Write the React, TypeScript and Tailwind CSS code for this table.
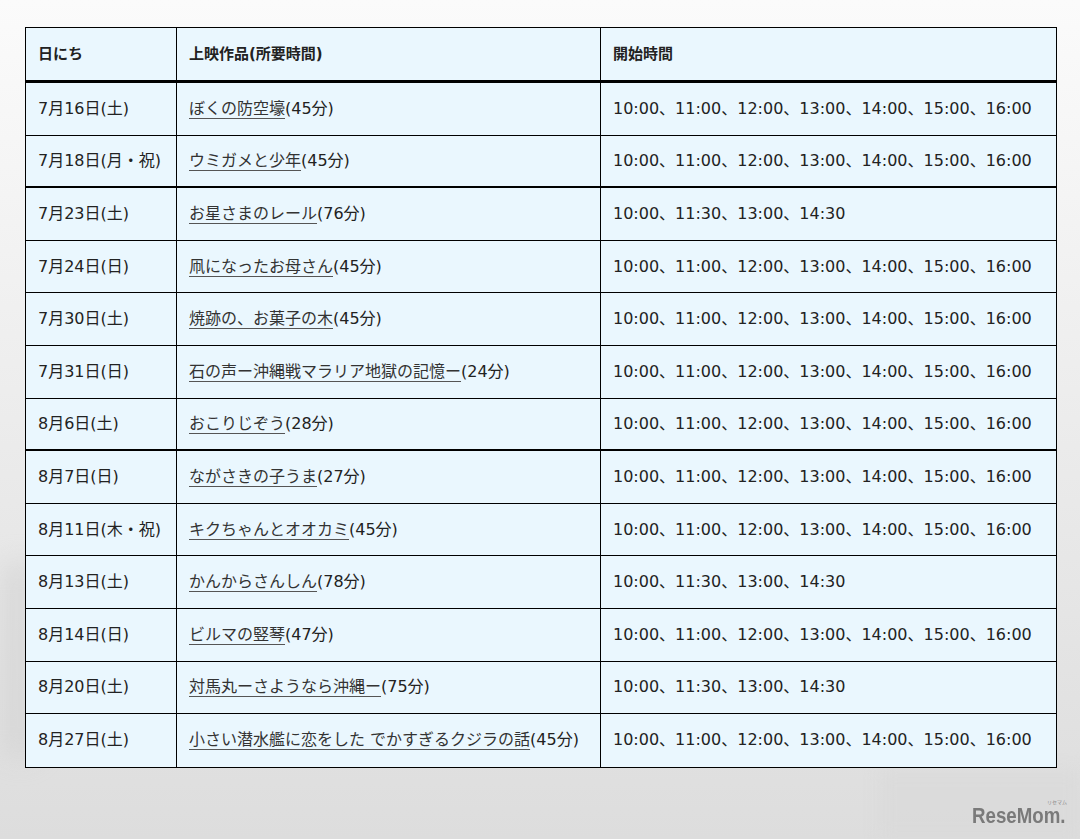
import React from 'react';

type Row = { date: string; title: string; mins: string; times: string; thick?: boolean };

const FULL = '10:00、11:00、12:00、13:00、14:00、15:00、16:00';
const SHORT = '10:00、11:30、13:00、14:30';

const rows: Row[] = [
  { date: '7月16日(土)', title: 'ぼくの防空壕', mins: '(45分)', times: FULL },
  { date: '7月18日(月・祝)', title: 'ウミガメと少年', mins: '(45分)', times: FULL, thick: true },
  { date: '7月23日(土)', title: 'お星さまのレール', mins: '(76分)', times: SHORT },
  { date: '7月24日(日)', title: '凧になったお母さん', mins: '(45分)', times: FULL },
  { date: '7月30日(土)', title: '焼跡の、お菓子の木', mins: '(45分)', times: FULL },
  { date: '7月31日(日)', title: '石の声ー沖縄戦マラリア地獄の記憶ー', mins: '(24分)', times: FULL },
  { date: '8月6日(土)', title: 'おこりじぞう', mins: '(28分)', times: FULL, thick: true },
  { date: '8月7日(日)', title: 'ながさきの子うま', mins: '(27分)', times: FULL },
  { date: '8月11日(木・祝)', title: 'キクちゃんとオオカミ', mins: '(45分)', times: FULL },
  { date: '8月13日(土)', title: 'かんからさんしん', mins: '(78分)', times: SHORT },
  { date: '8月14日(日)', title: 'ビルマの竪琴', mins: '(47分)', times: FULL },
  { date: '8月20日(土)', title: '対馬丸ーさようなら沖縄ー', mins: '(75分)', times: SHORT },
  { date: '8月27日(土)', title: '小さい潜水艦に恋をした でかすぎるクジラの話', mins: '(45分)', times: FULL },
];

const App = () => {
  return (
    <div className="relative w-[1080px] h-[839px] overflow-hidden bg-gradient-to-b from-[#fbfbfb] via-[#ececec] to-[#dddddd] font-['DejaVu_Sans','Noto_Sans_CJK_JP',sans-serif] text-[16px] text-[#222]">
      {/* faded photo texture */}
      <div className="absolute left-0 top-[560px] w-[40px] h-[200px] rounded-full bg-[#cfcfcf]/50 blur-md" />
      <div className="absolute left-[880px] top-[770px] w-[200px] h-[69px] bg-[#d8d8d8]/60 blur-sm" />

      <div className="relative pt-[27px] pl-[25px]">
        <div className="w-[1032px] border border-black bg-[#eaf7fe]">
          {/* header */}
          <div className="flex h-[55px] border-b-[3px] border-black font-bold text-[15px]">
            <div className="w-[151px] border-r border-black flex items-center pl-[12px]">日にち</div>
            <div className="w-[424px] border-r border-black flex items-center pl-[12px]">上映作品(所要時間)</div>
            <div className="flex-1 flex items-center pl-[12px]">開始時間</div>
          </div>

          {rows.map((r, i) => (
            <div
              key={r.date}
              className={
                'flex h-[52.6px] border-black ' +
                (i === rows.length - 1 ? '' : r.thick ? 'border-b-2' : 'border-b')
              }
            >
              <div className="w-[151px] border-r border-black flex items-center pl-[12px] whitespace-nowrap">{r.date}</div>
              <div className="w-[424px] border-r border-black flex items-center pl-[12px] whitespace-nowrap">
                <a className="text-[#333] underline decoration-[#555] underline-offset-[4px]">{r.title}</a>
                <span>{r.mins}</span>
              </div>
              <div className="flex-1 flex items-center pl-[12px] whitespace-nowrap">{r.times}</div>
            </div>
          ))}
        </div>
      </div>

      {/* logo */}
      <div className="absolute left-[972px] top-[805px]">
        <span className="block origin-left scale-x-[0.85] font-['Liberation_Sans',sans-serif] font-bold text-[22px] leading-none text-[#7a7a7a] whitespace-nowrap">ReseMom.</span>
      </div>
      <span className="absolute left-[1047px] top-[799px] text-[5px] leading-none text-[#888] font-['Noto_Sans_CJK_JP',sans-serif]">リセマム</span>
    </div>
  );
};

export default App;
